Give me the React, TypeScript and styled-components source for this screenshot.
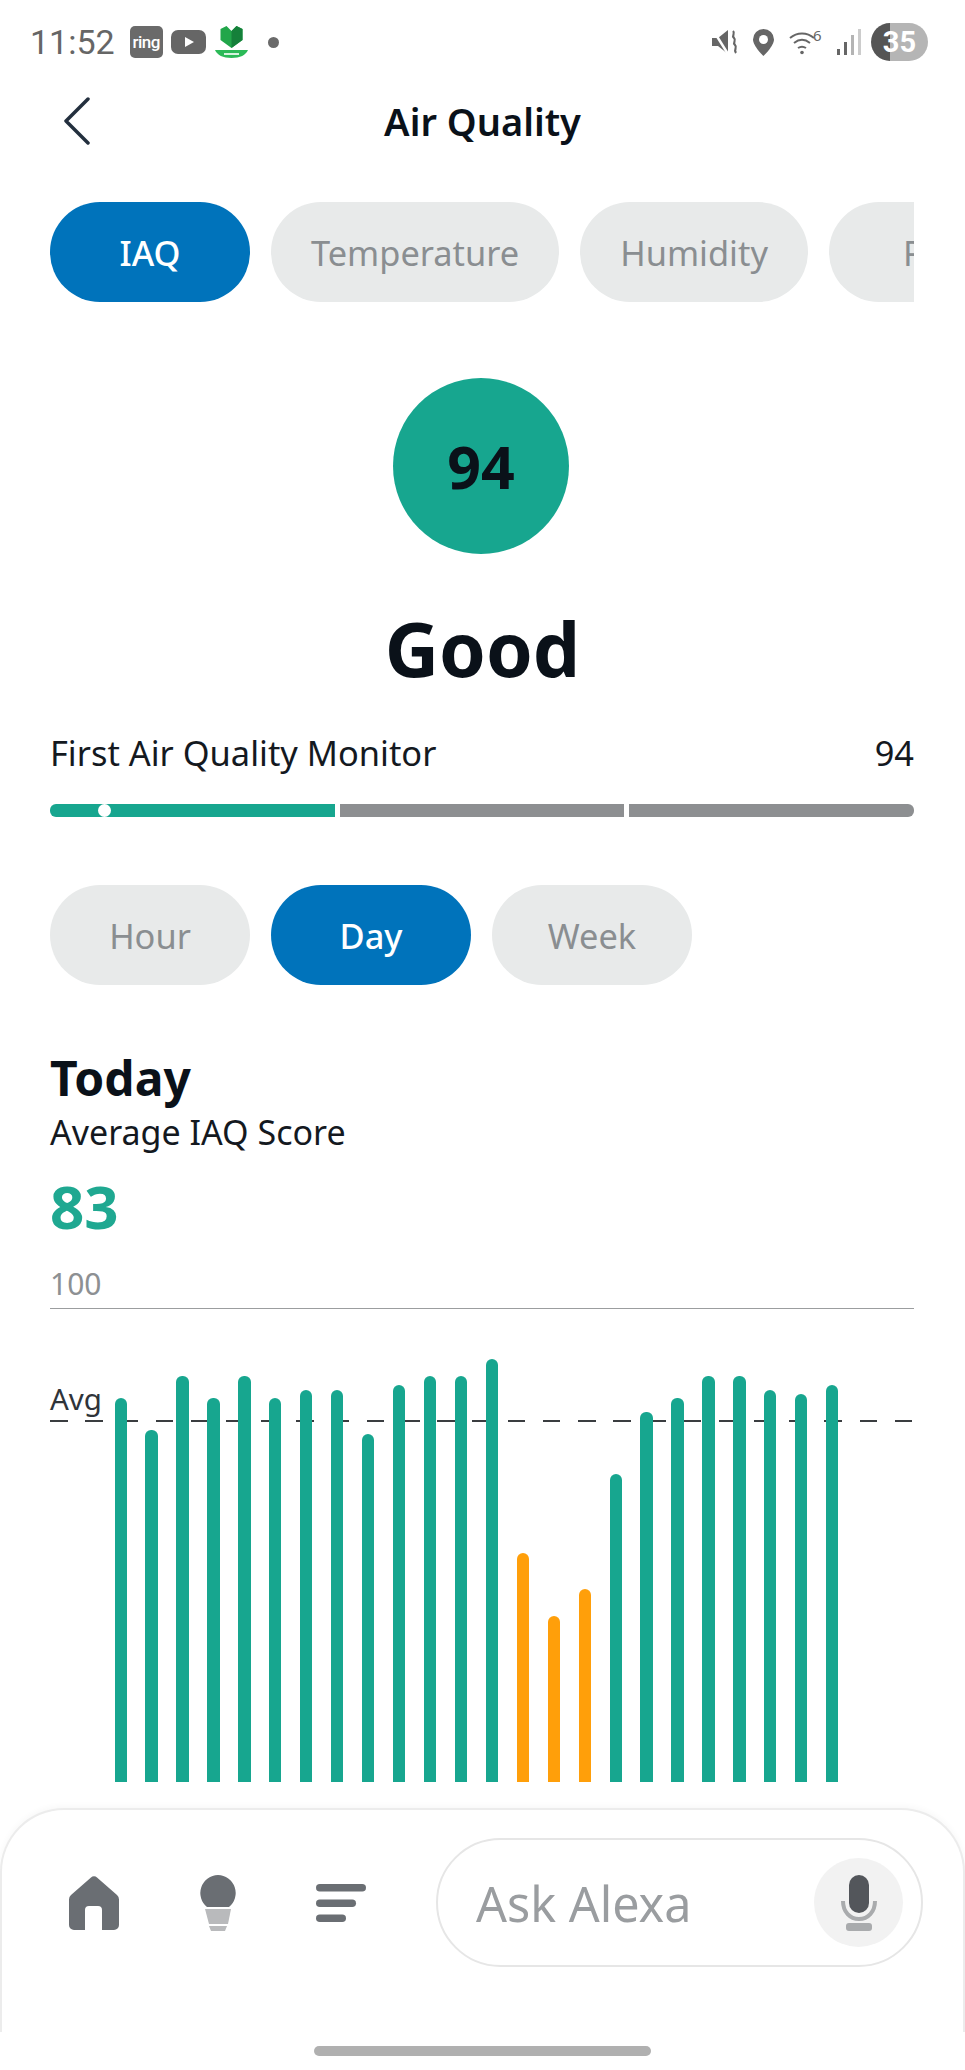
import React from 'react'
import styled, { createGlobalStyle } from 'styled-components'

const GlobalStyle = createGlobalStyle`
  html, body { margin: 0; padding: 0; background: #ffffff; }
  body { font-family: "Noto Sans", "Open Sans", sans-serif; }
`

const bars = [
  [1399, 'ok'], [1431, 'ok'], [1377, 'ok'], [1399, 'ok'], [1377, 'ok'], [1399, 'ok'],
  [1391, 'ok'], [1391, 'ok'], [1435, 'ok'], [1386, 'ok'], [1377, 'ok'], [1377, 'ok'],
  [1360, 'ok'], [1554, 'low'], [1617, 'low'], [1590, 'low'], [1475, 'ok'], [1413, 'ok'],
  [1399, 'ok'], [1377, 'ok'], [1377, 'ok'], [1391, 'ok'], [1395, 'ok'], [1386, 'ok'],
] as const

const metricTabs = ['IAQ', 'Temperature', 'Humidity', 'PM']
const rangeTabs = ['Hour', 'Day', 'Week']

const App = () => {
  return (
    <Page>
      <GlobalStyle />
      <StatusBar>
        <StatusLeft>
          <Clock>11:52</Clock>
          <RingBadge>ring</RingBadge>
          <svg width="35" height="24" viewBox="0 0 35 24">
            <rect x="0" y="0" width="35" height="24" rx="7" fill="#666666" />
            <path d="M14 7l9 5-9 5z" fill="#fff" />
          </svg>
          <svg width="35" height="32" viewBox="0 0 35 32">
            <path d="M17.500 5l-5-5-6 3v11l11 8 11-8V3l-6-3z" fill="#22a64a" />
            <path d="M17.500 5v17l11-8V3l-6-3z" fill="#15803a" />
            <path d="M1 24h33c-2 5-8 8-16.500 8S3 29 1 24z" fill="#2cba58" />
            <rect x="10" y="27" width="15" height="2" fill="#d5f2dd" />
          </svg>
          <Dot />
        </StatusLeft>
        <StatusRight>
          <svg width="26" height="26" viewBox="0 0 26 26" fill="#666666">
            <path d="M0 9h6l10-8v24L6 17H0z" />
            <path d="M1 1l15 24" stroke="#fff" strokeWidth="2.500" />
            <path d="M21 2c3 3-2 4 1 7s-2 4 1 7-2 4 1 8" fill="none" stroke="#666666" strokeWidth="2.200" />
          </svg>
          <svg width="21" height="27" viewBox="0 0 21 27">
            <path d="M10.500 0A10.500 10.500 0 0 0 0 10.500C0 17 10.500 27 10.500 27S21 17 21 10.500A10.500 10.500 0 0 0 10.500 0z" fill="#666666" />
            <circle cx="10.500" cy="10.500" r="4.500" fill="#fff" />
          </svg>
          <svg width="33" height="26" viewBox="0 0 33 26" fill="none" stroke="#666666" strokeWidth="2">
            <path d="M1 9c7-6 17-6 24 0M5 14c5-4 11-4 16 0M9 19c3-2 5-2 8 0" />
            <circle cx="13" cy="23.500" r="1.800" fill="#666666" stroke="none" />
            <text x="24" y="12" fontSize="15" fill="#666666" stroke="none" fontFamily="Noto Sans">6</text>
          </svg>
          <svg width="24" height="26" viewBox="0 0 24 26">
            <rect x="0" y="20" width="3" height="6" fill="#666666" />
            <rect x="7" y="13" width="3" height="13" fill="#666666" />
            <rect x="14" y="6" width="3" height="20" fill="#b4b4b4" />
            <rect x="21" y="0" width="3" height="26" fill="#cccccc" />
          </svg>
          <Battery>35</Battery>
        </StatusRight>
      </StatusBar>

      <Header>
        <BackButton>
          <svg width="30" height="48" viewBox="0 0 30 48" fill="none" stroke="#232f3e" strokeWidth="3.500" strokeLinecap="round" strokeLinejoin="round">
            <path d="M26 2L4 24l22 22" />
          </svg>
        </BackButton>
        <Title>Air Quality</Title>
      </Header>

      <MetricTabs>
        {metricTabs.map((t) => (
          <Pill key={t} $active={t === 'IAQ'}>{t}</Pill>
        ))}
      </MetricTabs>

      <ScoreSection>
        <ScoreCircle>94</ScoreCircle>
        <ScoreLabel>Good</ScoreLabel>
      </ScoreSection>

      <MonitorRow>
        <span>First Air Quality Monitor</span>
        <span>94</span>
      </MonitorRow>
      <Scale>
        <ScaleSeg $on>
          <ScaleMark />
        </ScaleSeg>
        <ScaleSeg />
        <ScaleSeg />
      </Scale>

      <RangeTabs>
        {rangeTabs.map((t) => (
          <Pill key={t} $active={t === 'Day'}>{t}</Pill>
        ))}
      </RangeTabs>

      <Today>Today</Today>
      <AvgCaption>Average IAQ Score</AvgCaption>
      <AvgValue>83</AvgValue>

      <ChartMax>100</ChartMax>
      <Chart>
        <AvgLabel>Avg</AvgLabel>
        <AvgLine />
        <Bars>
          {bars.map(([top, kind], i) => (
            <Bar key={i} $low={kind === 'low'} style={{ height: 1783 - top }} />
          ))}
        </Bars>
      </Chart>

      <BottomSheet>
        <NavIcons>
          <svg width="52" height="54" viewBox="0 0 52 54">
            <path d="M23 1.500a4 4 0 0 1 6 0L49 19a6 6 0 0 1 2 4.500V49a5 5 0 0 1-5 5H34V34a4 4 0 0 0-4-4h-9a4 4 0 0 0-4 4v20H6a5 5 0 0 1-5-5V23.500A6 6 0 0 1 3 19z" fill="#6a6e73" />
          </svg>
          <svg width="36" height="56" viewBox="0 0 36 56">
            <path d="M18 0a18 18 0 0 1 11 32H7A18 18 0 0 1 18 0z" fill="#6a6e73" />
            <path d="M5 34h26l-3 15H9z" fill="#b9babc" />
            <path d="M9 51h18l-2 5H11z" fill="#b9babc" />
          </svg>
          <svg width="50" height="38" viewBox="0 0 50 38" fill="#6a6e73">
            <rect x="0" y="0" width="50" height="7.500" rx="3.750" />
            <rect x="0" y="15.500" width="40" height="7.500" rx="3.750" />
            <rect x="0" y="30.500" width="30" height="7.500" rx="3.750" />
          </svg>
        </NavIcons>
        <AskBox>
          <AskText>Ask Alexa</AskText>
          <MicCircle>
            <svg width="36" height="56" viewBox="0 0 36 56" fill="none">
              <rect x="8" y="0" width="20" height="38" rx="10" fill="#53565b" />
              <path d="M2 26c0 11 7 18 16 18s16-7 16-18" stroke="#a9abad" strokeWidth="4" />
              <rect x="5" y="48" width="26" height="8" rx="3" fill="#a9abad" />
            </svg>
          </MicCircle>
        </AskBox>
      </BottomSheet>

      <HomeZone>
        <HomeBar />
      </HomeZone>
    </Page>
  )
}

export default App

const Page = styled.div`
  width: 965px;
  height: 2070px;
  background: #ffffff;
  overflow: hidden;
  display: flex;
  flex-direction: column;
  color: #0f1111;
`
const StatusBar = styled.div`
  height: 42px;
  margin-top: 21px;
  padding: 0 37px 0 30px;
  display: flex;
  align-items: center;
  justify-content: space-between;
`
const StatusLeft = styled.div`
  display: flex;
  align-items: center;
  gap: 8px;
`
const Clock = styled.div`
  font-family: "Roboto", sans-serif;
  font-size: 34px;
  color: #666666;
  margin-right: 7px;
`
const RingBadge = styled.div`
  width: 33px;
  height: 32px;
  border-radius: 5px;
  background: #6a6a6a;
  color: #ffffff;
  font-family: "Roboto", sans-serif;
  font-weight: 500;
  font-size: 17px;
  letter-spacing: -0.5px;
  display: flex;
  align-items: center;
  justify-content: center;
`
const Dot = styled.div`
  width: 11px;
  height: 11px;
  border-radius: 50%;
  background: #6a6a6a;
  margin-left: 11px;
`
const StatusRight = styled.div`
  display: flex;
  align-items: center;
  gap: 15px;
`
const Battery = styled.div`
  width: 57px;
  height: 38px;
  margin-left: -5px;
  border-radius: 19px;
  background: linear-gradient(90deg, #555555 0 33%, #b5b5b5 33% 100%);
  color: #ffffff;
  font-family: "Roboto", sans-serif;
  font-weight: 700;
  font-size: 29px;
  display: flex;
  align-items: center;
  justify-content: center;
`
const Header = styled.div`
  position: relative;
  height: 60px;
  margin-top: 28px;
  display: flex;
  align-items: center;
  justify-content: center;
`
const BackButton = styled.div`
  position: absolute;
  left: 62px;
  top: 6px;
  line-height: 0;
`
const Title = styled.div`
  font-size: 38px;
  font-weight: 600;
  color: #0a1119;
`
const MetricTabs = styled.div`
  margin: 51px 51px 0 50px;
  display: flex;
  gap: 21px;
  overflow: hidden;
`
const RangeTabs = styled.div`
  margin: 68px 0 0 50px;
  display: flex;
  gap: 21px;
`
const Pill = styled.div<{ $active?: boolean }>`
  flex: none;
  box-sizing: border-box;
  min-width: 200px;
  height: 100px;
  padding: 0 40px;
  border-radius: 50px;
  background: ${(p) => (p.$active ? '#0073bb' : '#e8eaea')};
  color: ${(p) => (p.$active ? '#ffffff' : '#8a8e91')};
  font-size: 34.400px;
  font-weight: ${(p) => (p.$active ? 500 : 400)};
  display: flex;
  align-items: center;
  justify-content: center;
`
const ScoreSection = styled.div`
  margin-top: 76px;
  display: flex;
  flex-direction: column;
  align-items: center;
`
const ScoreCircle = styled.div`
  width: 176px;
  height: 176px;
  margin-right: 3px;
  border-radius: 50%;
  background: #17a68f;
  color: #0a1119;
  font-size: 59px;
  font-weight: 700;
  display: flex;
  align-items: center;
  justify-content: center;
`
const ScoreLabel = styled.div`
  margin-top: 51px;
  font-size: 75px;
  line-height: 86px;
  font-weight: 700;
  color: #0a1119;
`
const MonitorRow = styled.div`
  margin: 40px 51px 0 50px;
  display: flex;
  justify-content: space-between;
  font-size: 34.400px;
  line-height: 44px;
  color: #14191f;
`
const Scale = styled.div`
  margin: 29px 51px 0 50px;
  display: flex;
  gap: 5px;
`
const ScaleSeg = styled.div<{ $on?: boolean }>`
  position: relative;
  flex: 1;
  height: 13px;
  background: ${(p) => (p.$on ? '#17a68f' : '#8d8f91')};
  &:first-child { border-radius: 6px 0 0 6px; }
  &:last-child { border-radius: 0 6px 6px 0; }
`
const ScaleMark = styled.div`
  position: absolute;
  left: 48px;
  top: 0;
  width: 13px;
  height: 13px;
  border-radius: 50%;
  background: #ffffff;
`
const Today = styled.div`
  margin: 66px 0 0 50px;
  font-size: 48px;
  line-height: 54px;
  font-weight: 700;
  color: #0a1119;
`
const AvgCaption = styled.div`
  margin: 5px 0 0 50px;
  font-size: 34px;
  line-height: 44px;
  color: #14191f;
`
const AvgValue = styled.div`
  margin: 16px 0 0 50px;
  font-size: 60px;
  line-height: 72px;
  font-weight: 700;
  color: #1fa891;
`
const ChartMax = styled.div`
  margin: 23px 51px 0 50px;
  padding-bottom: 5px;
  font-size: 30px;
  line-height: 38px;
  color: #8d9093;
  border-bottom: 1px solid #9b9d9f;
`
const Chart = styled.div`
  position: relative;
  margin: 0 51px 0 50px;
  height: 473px;
`
const AvgLabel = styled.div`
  position: absolute;
  left: 0;
  top: 71px;
  font-size: 29.500px;
  line-height: 38px;
  color: #2f3439;
`
const AvgLine = styled.div`
  position: absolute;
  left: 0;
  right: 0;
  top: 111px;
  height: 2px;
  background: repeating-linear-gradient(90deg, #3a3d40 0 17.600px, transparent 17.600px 35.200px);
`
const Bars = styled.div`
  position: absolute;
  left: 64.500px;
  bottom: 0;
  display: flex;
  align-items: flex-end;
  gap: 18.650px;
`
const Bar = styled.div<{ $low?: boolean }>`
  width: 12.300px;
  border-radius: 6px 6px 0 0;
  background: ${(p) => (p.$low ? '#ff9f0a' : '#17a68f')};
`
const BottomSheet = styled.div`
  position: absolute;
  left: 0;
  top: 1808px;
  width: 965px;
  height: 224px;
  box-sizing: border-box;
  border: 2px solid #ececec;
  border-bottom: none;
  border-radius: 64px 64px 0 0;
  background: #ffffff;
  box-shadow: 0 -2px 6px rgba(0, 0, 0, 0.03);
  display: flex;
  padding: 28px 40px 0 66px;
  justify-content: space-between;
`
const NavIcons = styled.div`
  display: flex;
  align-items: center;
  height: 129px;
  gap: 80px;
`
const AskBox = styled.div`
  box-sizing: border-box;
  width: 487px;
  height: 129px;
  border: 2px solid #e6e6e6;
  border-radius: 65px;
  padding: 0 18px 0 38px;
  display: flex;
  align-items: center;
  justify-content: space-between;
`
const AskText = styled.div`
  font-size: 48.500px;
  color: #9a9da0;
`
const MicCircle = styled.div`
  width: 89px;
  height: 89px;
  border-radius: 50%;
  background: #f2f2f2;
  display: flex;
  align-items: center;
  justify-content: center;
`
const HomeZone = styled.div`
  position: absolute;
  left: 0;
  top: 2032px;
  width: 965px;
  height: 38px;
  background: #ffffff;
`
const HomeBar = styled.div`
  width: 337px;
  height: 10px;
  margin: 14px auto 0;
  border-radius: 5px;
  background: #b0b0b0;
`
